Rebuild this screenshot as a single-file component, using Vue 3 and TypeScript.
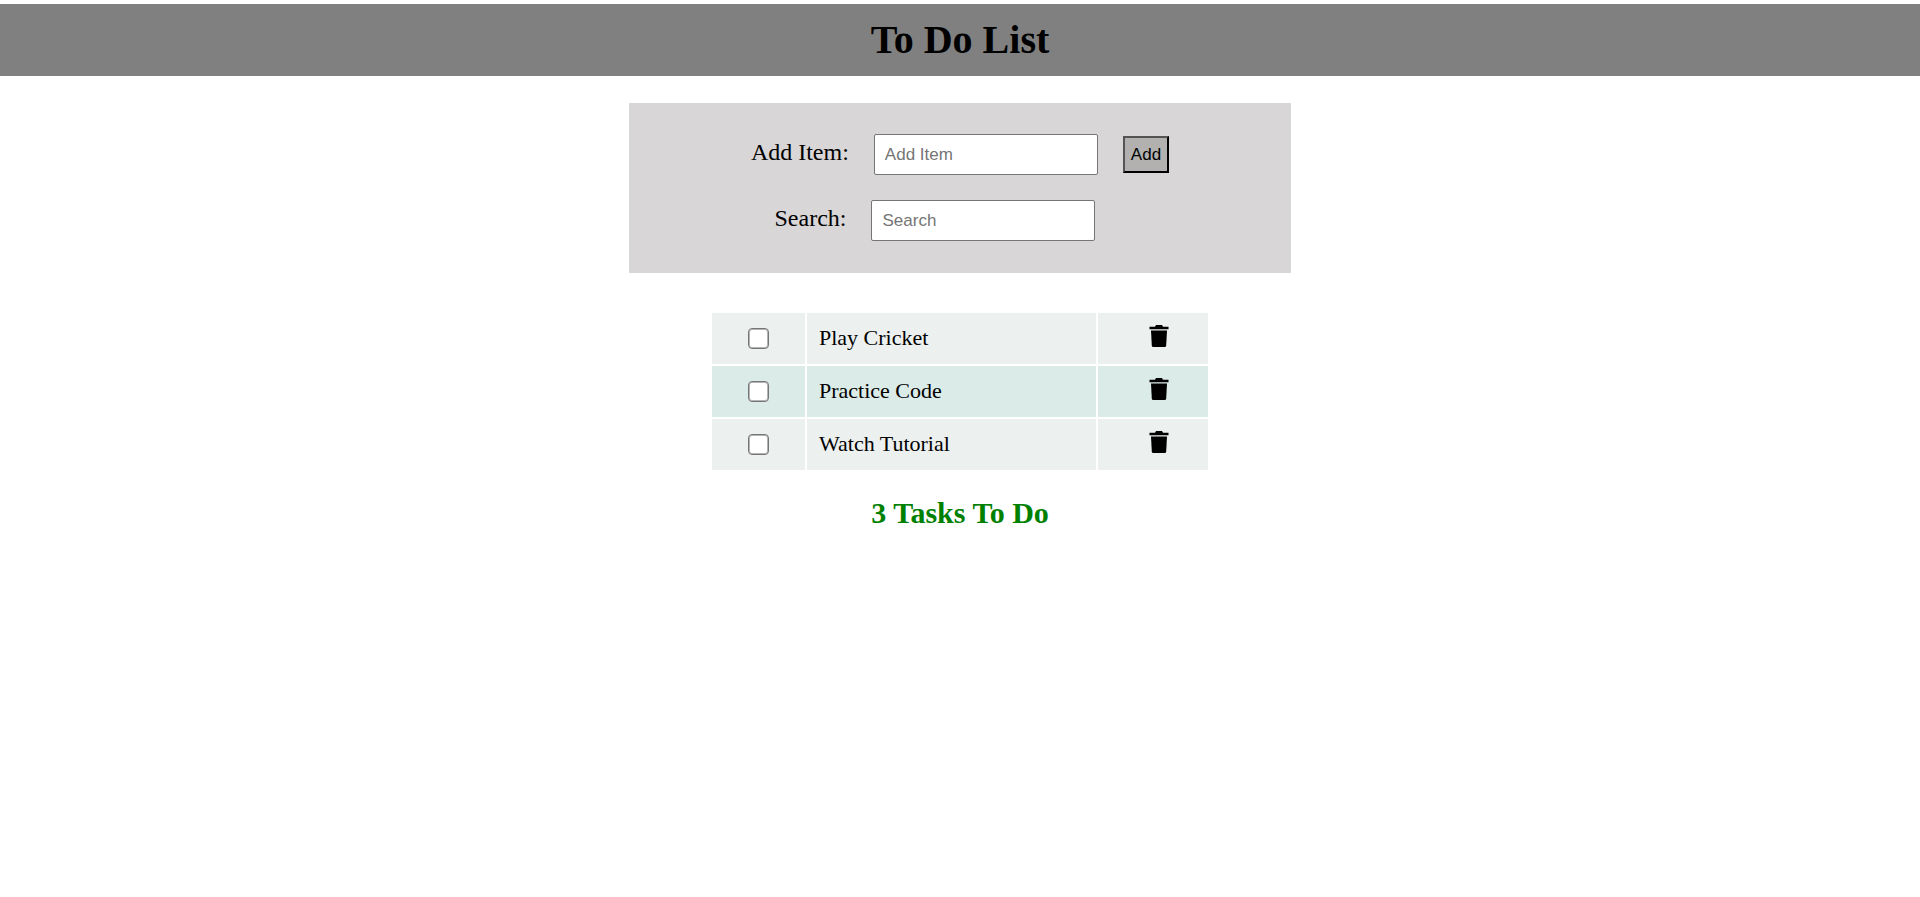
<script setup lang="ts">
import { computed, ref } from 'vue'

interface Task {
  id: number
  name: string
  done: boolean
}

const tasks = ref<Task[]>([
  { id: 1, name: 'Play Cricket', done: false },
  { id: 2, name: 'Practice Code', done: false },
  { id: 3, name: 'Watch Tutorial', done: false },
])
const newItem = ref('')
const search = ref('')

const visibleTasks = computed(() =>
  tasks.value.filter((t) => t.name.toLowerCase().includes(search.value.toLowerCase())),
)

function addItem(): void {
  const name = newItem.value.trim()
  if (!name) return
  tasks.value.push({ id: Date.now(), name, done: false })
  newItem.value = ''
}

function removeItem(id: number): void {
  tasks.value = tasks.value.filter((t) => t.id !== id)
}
</script>

<template>
  <div class="page">
    <header class="header">
      <h1>To Do List</h1>
    </header>
    <main>
      <section class="panel">
        <form class="row" @submit.prevent="addItem">
          <label for="add-item">Add Item:</label>
          <input id="add-item" v-model="newItem" type="text" placeholder="Add Item" />
          <button class="add" type="submit">Add</button>
        </form>
        <form class="row search" @submit.prevent>
          <label for="search">Search:</label>
          <input id="search" v-model="search" type="text" placeholder="Search" />
        </form>
      </section>
      <table class="tasks">
        <tbody>
          <tr v-for="task in visibleTasks" :key="task.id">
            <td class="check">
              <input v-model="task.done" type="checkbox" :aria-labelledby="`task-${task.id}`" />
            </td>
            <td :id="`task-${task.id}`" class="name">{{ task.name }}</td>
            <td class="remove">
              <button type="button" :aria-label="`Delete ${task.name}`" @click="removeItem(task.id)">
                <svg viewBox="0 0 20 22" width="20" height="22" aria-hidden="true">
                  <path d="M7 0h6l1 1.8h5.5v2.4H.5V1.8H6z" />
                  <path d="M2 5.6h16l-.8 14.9q-.1 1.5-1.5 1.5H4.3q-1.4 0-1.5-1.5z" />
                </svg>
              </button>
            </td>
          </tr>
        </tbody>
      </table>
      <h2 class="count">{{ tasks.length }} Tasks To Do</h2>
    </main>
  </div>
</template>

<style>
body {
  margin: 0;
  background: #fff;
}
</style>

<style scoped>
.page {
  padding-top: 4px;
  font-family: "Liberation Serif", "Times New Roman", serif;
  color: #000;
}
.header {
  padding: 13px 0;
  background: #808080;
  text-align: center;
}
h1 {
  margin: 0;
  font-size: 40px;
  line-height: 46px;
}
main {
  display: flex;
  flex-direction: column;
  align-items: center;
  padding-top: 27px;
}
.panel {
  box-sizing: border-box;
  display: flex;
  flex-direction: column;
  gap: 25px;
  width: 100%;
  max-width: 662px;
  padding: 31px 0 32px;
  background: #d8d6d7;
}
.row {
  display: flex;
  justify-content: center;
  align-items: baseline;
  gap: 25px;
}
.search {
  padding-right: 50px;
}
label {
  font-size: 24px;
  line-height: 28px;
}
.row input {
  box-sizing: border-box;
  width: 224px;
  height: 41px;
  padding: 0 10px;
  border: 1px solid #767676;
  border-radius: 2px;
  background: #fff;
  font: 17px "Liberation Sans", Arial, sans-serif;
}
.row input::placeholder {
  color: #757575;
}
.add {
  height: 37px;
  padding: 0 6px;
  border: 2px outset #000;
  background: #b2b1b0;
  color: #000;
  font: 17px "Liberation Sans", Arial, sans-serif;
}
.tasks {
  width: 100%;
  max-width: 500px;
  margin-top: 38px;
  border-spacing: 2px;
  table-layout: fixed;
}
td {
  height: 51px;
  padding: 0;
  background: #ecf0ef;
}
tr:nth-child(even) td {
  background: #dbebe8;
}
.check {
  width: 93px;
  text-align: center;
}
.check input {
  appearance: none;
  box-sizing: border-box;
  width: 21px;
  height: 21px;
  margin: 0;
  border: 1px solid #767676;
  border-radius: 4px;
  background: #fff;
  box-shadow: inset 0 0 0 1px #b4b4b4;
  vertical-align: middle;
}
.check input:checked {
  background: #0075ff;
  box-shadow: inset 0 0 0 4px #fff;
}
.name {
  height: 49px;
  padding: 0 0 2px 12px;
  font-size: 22px;
  line-height: 26px;
}
.remove {
  width: 98px;
  padding: 0 0 5px 12px;
  height: 46px;
  text-align: center;
}
.remove button {
  display: block;
  margin: 0 auto;
  padding: 0;
  border: 0;
  background: none;
  cursor: pointer;
}
.remove svg {
  display: block;
}
.count {
  margin: 24px 0 0;
  color: #008000;
  font-size: 30px;
  line-height: 34px;
}
</style>
